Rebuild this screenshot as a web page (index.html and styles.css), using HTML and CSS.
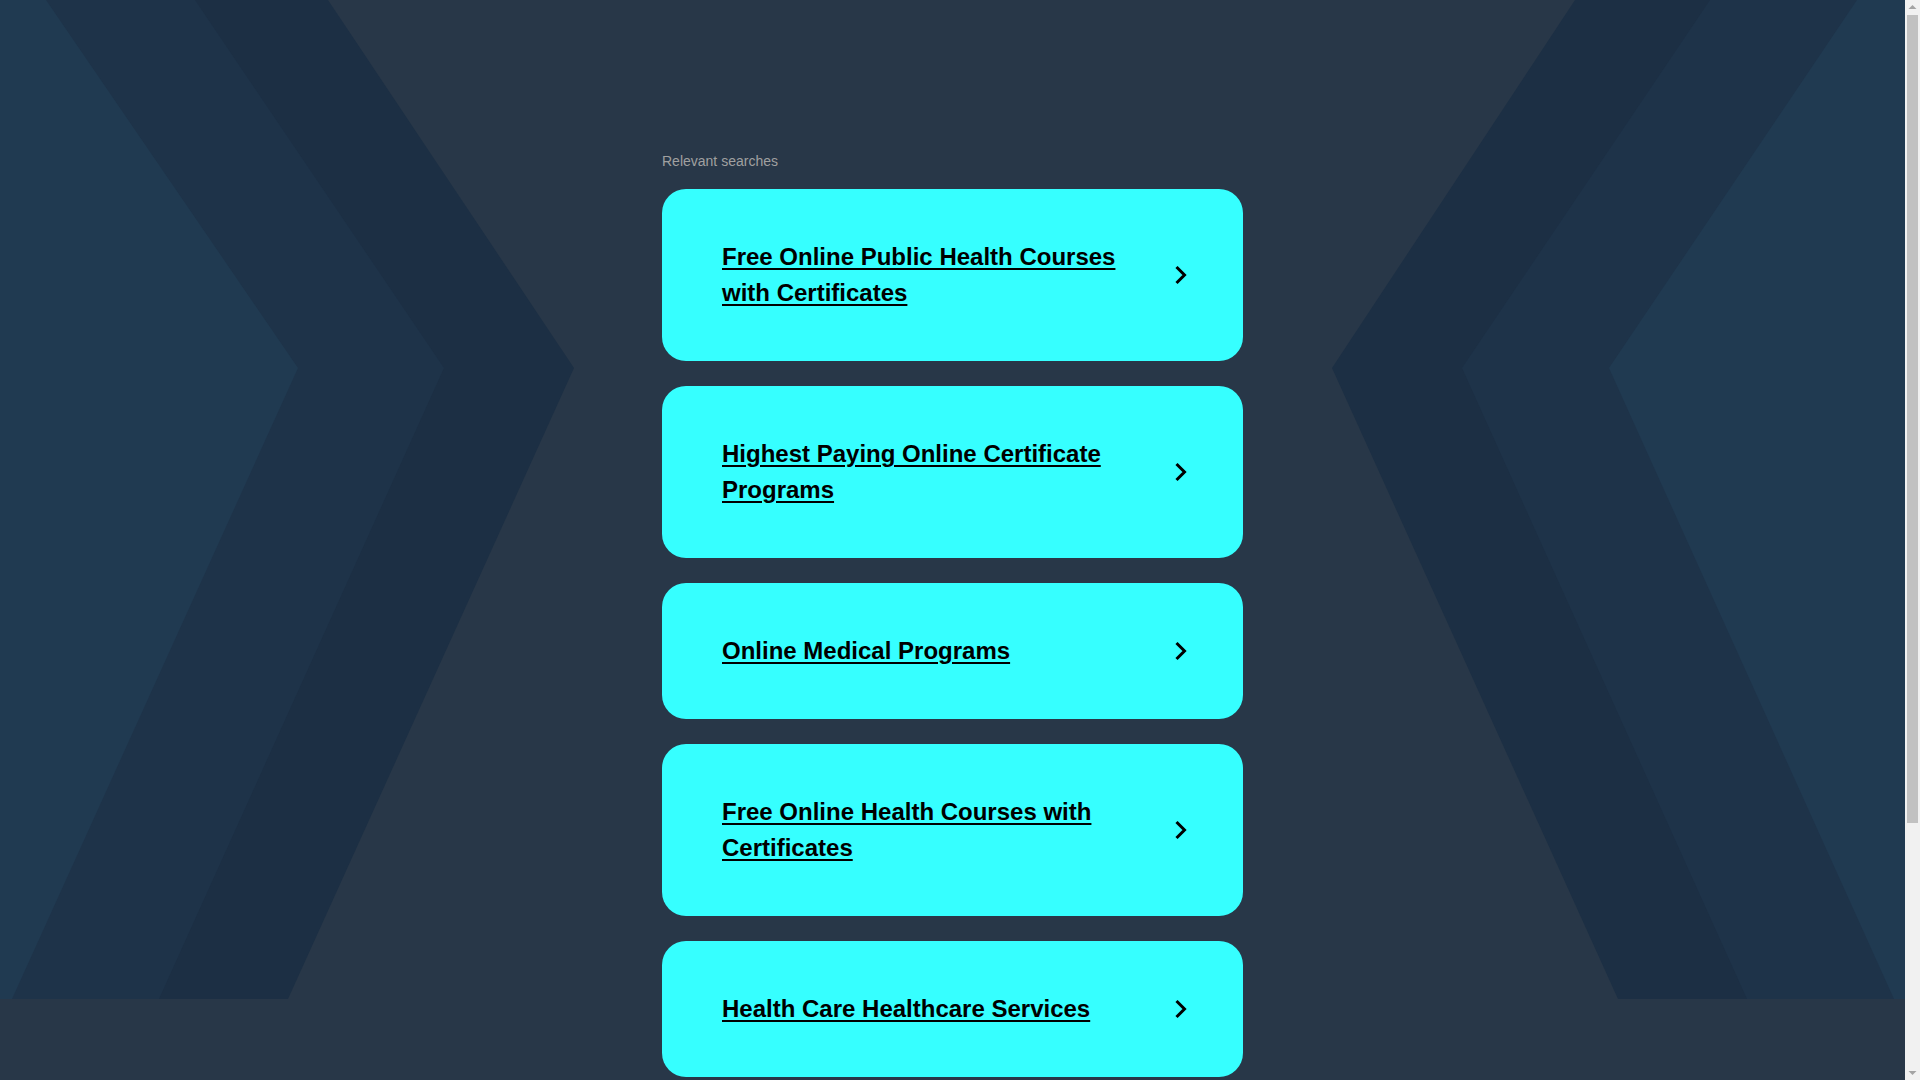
FILE: index.html
```html
<!DOCTYPE html>
<html lang="en">
<head>
<meta charset="utf-8">
<title>Relevant searches</title>
<link rel="stylesheet" href="styles.css">
</head>
<body>
<svg class="bg" viewBox="0 0 1905 999" preserveAspectRatio="none" aria-hidden="true">
  <polygon class="b1" points="0,0 328,0 574,368 288,999 0,999"/>
  <polygon class="b2" points="0,0 195,0 444,368 159,999 0,999"/>
  <polygon class="b3" points="0,0 46,0 298,368 12,999 0,999"/>
  <polygon class="b1" points="1905,0 1575,0 1332,368 1618,999 1905,999"/>
  <polygon class="b2" points="1905,0 1710,0 1462,368 1747,999 1905,999"/>
  <polygon class="b3" points="1905,0 1857,0 1609,368 1894,999 1905,999"/>
</svg>
<main class="wrap">
  <div class="label">Relevant searches</div>
  <a class="card" href="#"><span class="title">Free Online Public Health Courses with Certificates</span><svg class="chev" viewBox="0 0 24 24"><path d="M9.5 4 L17.5 12 L9.5 20"/></svg></a>
  <a class="card" href="#"><span class="title">Highest Paying Online Certificate Programs</span><svg class="chev" viewBox="0 0 24 24"><path d="M9.5 4 L17.5 12 L9.5 20"/></svg></a>
  <a class="card" href="#"><span class="title">Online Medical Programs</span><svg class="chev" viewBox="0 0 24 24"><path d="M9.5 4 L17.5 12 L9.5 20"/></svg></a>
  <a class="card" href="#"><span class="title">Free Online Health Courses with Certificates</span><svg class="chev" viewBox="0 0 24 24"><path d="M9.5 4 L17.5 12 L9.5 20"/></svg></a>
  <a class="card" href="#"><span class="title">Health Care Healthcare Services</span><svg class="chev" viewBox="0 0 24 24"><path d="M9.5 4 L17.5 12 L9.5 20"/></svg></a>
</main>
<div class="scrollbar" aria-hidden="true">
  <div class="sb-arrow"><svg viewBox="0 0 15 15"><polygon points="3.5,9 7.5,5 11.5,9"/></svg></div>
  <div class="sb-thumb"></div>
  <div class="sb-space"></div>
  <div class="sb-arrow"><svg viewBox="0 0 15 15"><polygon points="3.5,6 11.5,6 7.5,10"/></svg></div>
</div>
</body>
</html>
```
FILE: styles.css
```css
html, body {
  margin: 0;
  padding: 0;
}
body {
  background: #283748;
  font-family: "Liberation Sans", Arial, sans-serif;
  position: relative;
  min-height: 100vh;
  margin-right: 15px;
}
.bg {
  position: absolute;
  top: 0;
  left: 0;
  width: 100%;
  height: 999px;
  z-index: 0;
  display: block;
}
.b1 { fill: #1c2f44; }
.b2 { fill: #1e3349; }
.b3 { fill: #203a51; }
.wrap {
  position: relative;
  z-index: 1;
  width: 581px;
  margin: 0 auto;
  padding: 151px 0 320px;
}
.label {
  font-size: 14px;
  line-height: 20px;
  color: #a0a0a0;
  margin-bottom: 18px;
}
.card {
  display: flex;
  align-items: center;
  background: #36ffff;
  border-radius: 24px;
  padding: 50px 52px 50px 60px;
  margin-bottom: 25px;
  color: #000;
  text-decoration: none;
}
.title {
  flex: 1;
  font-size: 24px;
  line-height: 36px;
  font-weight: bold;
  text-decoration: underline;
  text-underline-offset: 3px;
  text-decoration-thickness: 2px;
}
.chev {
  width: 24px;
  height: 24px;
  margin-left: 30px;
  flex: none;
}
.chev path {
  fill: none;
  stroke: #000;
  stroke-width: 3;
}
.scrollbar {
  position: fixed;
  top: 0;
  right: 0;
  width: 15px;
  height: 100vh;
  background: #f1f1f1;
  display: flex;
  flex-direction: column;
  z-index: 5;
}
.sb-arrow {
  height: 15px;
  flex: none;
}
.sb-arrow svg {
  display: block;
  width: 15px;
  height: 15px;
}
.sb-arrow polygon {
  fill: #a3a3a3;
}
.sb-thumb {
  height: 808px;
  margin: 0 2px;
  background: #c1c1c1;
  flex: none;
}
.sb-space {
  flex: 1;
}
```
